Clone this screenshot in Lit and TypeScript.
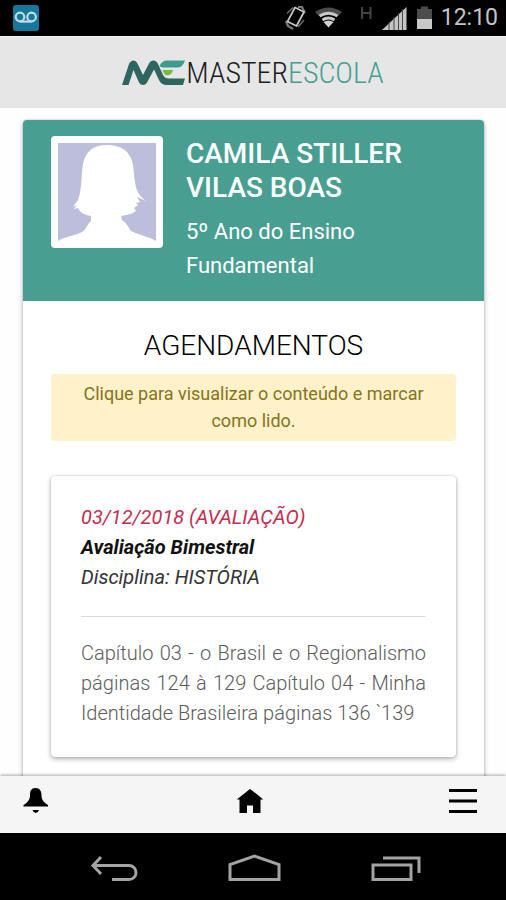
import { LitElement, html, css, svg } from "lit";
import { customElement, property } from "lit/decorators.js";

const base = css`
  :host {
    display: block;
    font-family: Roboto, "Liberation Sans", sans-serif;
    color: #111;
  }
  * {
    box-sizing: border-box;
  }
  svg {
    display: block;
  }
`;

@customElement("status-bar")
class StatusBar extends LitElement {
  static styles = [
    base,
    css`
      .bar {
        display: flex;
        align-items: center;
        justify-content: space-between;
        height: 36px;
        padding: 0 8px 0 12px;
        background: #000;
      }
      .icons {
        display: flex;
        align-items: center;
      }
      .time {
        margin-left: 8px;
        color: #c4c4c4;
        font-size: 23px;
        line-height: 36px;
      }
    `,
  ];

  render() {
    return html`
      <div class="bar">
        <svg width="28" height="28" viewBox="0 0 28 28" aria-label="Correio de voz">
          <rect x="1" y="1" width="26" height="26" rx="3" fill="#15789a" />
          <g fill="none" stroke="#c3dce4" stroke-width="2.2">
            <circle cx="8" cy="13" r="4.3" />
            <circle cx="19.6" cy="13" r="4.3" />
            <path d="M8 17.6H19.6" />
          </g>
        </svg>
        <div class="icons">
          <svg width="154" height="36" viewBox="0 0 154 36" aria-hidden="true">
            <g transform="translate(-281 0)">
              <g fill="none" stroke-width="1.7">
                <path d="M289 13.500l6-6M300 27l6-7" stroke="#666" />
                <path d="M288 21l2 5 5 3" stroke="#777" stroke-width="2.4" />
                <path d="M300 7l4 0 3 6" stroke="#777" stroke-width="2.2" />
                <path d="M297 7.500L306 12 298.500 26 289.500 21.500z" stroke="#c8c8c8" stroke-linejoin="round" />
              </g>
              <path d="M317 12Q330.500 3 344 12L340 16Q330.500 10 321 16z" fill="#4c4c4c" />
              <g fill="none" stroke="#c9c9c9" stroke-width="3">
                <path d="M321.500 16Q330.500 10.500 339.500 16" />
                <path d="M324.500 20Q330.500 16 336.500 20" />
              </g>
              <path d="M325.500 22Q330.500 19 335.500 22L330.500 27.500z" fill="#d4d4d4" />
              <path d="M364 7v12M372.500 7v12M364 13h8.500" stroke="#444" stroke-width="2" fill="none" />
              <path d="M384 30L408.500 7V30z" fill="#c4c4c4" />
              <path d="M391 22v8M396 17v13M400.500 13v17M404.500 9v21" stroke="#444" stroke-width="1" />
              <path d="M419 9h4V6.500h7V9h4v10h-15z" fill="#4c4c4c" />
              <path d="M419 19h15v10h-15z" fill="#c8c8c8" />
            </g>
          </svg>
          <span class="time">12:10</span>
        </div>
      </div>
    `;
  }
}

@customElement("brand-header")
class BrandHeader extends LitElement {
  static styles = [
    base,
    css`
      .header {
        display: flex;
        align-items: center;
        justify-content: center;
        height: 72px;
        background: #e6e6e6;
        border-top: 1px solid #f4f4f4;
      }
      .name {
        font-family: "Roboto Condensed", "Liberation Sans Narrow", Roboto, sans-serif;
        font-size: 30px;
        font-weight: 300;
        line-height: 40px;
        color: #1c1c1c;
      }
      .accent {
        color: #43a092;
      }
    `,
  ];

  render() {
    return html`
      <header class="header">
        <svg width="64" height="26" viewBox="0 0 64 26" aria-hidden="true">
          <path d="M0 25L7 4Q8.500 0.500 11.500 0.500Q14 0.500 15.500 3.500L21 15 27 3.500Q28.500 0.500 31.500 0.500Q34.500 0.500 36 4L41 15Q43 18.500 47 18.500H63L61 25H45Q39 25 37 20L32 9.500 25 22.500Q23.500 25 21 25Q18.500 25 17 22.500L11.500 10 6.500 25z" fill="#2f6560" />
          <path d="M37.500 6Q40 0.500 45 0.500H63Q61 7 56 7.500H42Q39.500 7.500 37.500 6z" fill="#3c9c8e" />
          <path d="M40.500 10H51Q50 15 45 15.500Q42 15 40.500 10z" fill="#76bd3c" />
        </svg>
        <span class="name">MASTER<span class="accent">ESCOLA</span></span>
      </header>
    `;
  }
}

@customElement("student-header")
class StudentHeader extends LitElement {
  @property() name = "";
  @property() grade = "";

  static styles = [
    base,
    css`
      .student {
        display: flex;
        gap: 23px;
        padding: 16px 60px 18px 28px;
        background: #489f91;
        color: #fff;
      }
      .avatar {
        flex: none;
        width: 112px;
        height: 112px;
        padding: 7px;
        border-radius: 4px;
        background: #fff;
      }
      .name {
        margin: 1px 0 10px;
        font-size: 28px;
        font-weight: 500;
        line-height: 34px;
      }
      .grade {
        margin: 0;
        font-size: 22px;
        line-height: 34px;
      }
    `,
  ];

  render() {
    return html`
      <section class="student">
        <div class="avatar">
          <svg width="98" height="98" viewBox="0 0 98 98" role="img" aria-label="Foto do aluno">
            <rect width="98" height="98" fill="#bcbedb" />
            <path d="M49 2C35 2 27 9 25 21C23 33 24 46 20 57L15 64L19 62L16 66L20 65C23 71 28 72 33 73V78C29 81 29 86 24 89C17 93 5 94 0 98H98C93 94 83 93 73 88C70 84 69 80 64 77L63 73C69 72 74 71 78 68L76 65L80 62L78 60L82 59L79 54L88 58C81 53 78 47 77 39C75 29 77 18 69 9C64 4 57 2 49 2Z" fill="#fff" />
          </svg>
        </div>
        <div>
          <h1 class="name">${this.name}</h1>
          <p class="grade">${this.grade}</p>
        </div>
      </section>
    `;
  }
}

@customElement("event-card")
class EventCard extends LitElement {
  @property() date = "";
  @property() kind = "";
  @property() heading = "";
  @property() subject = "";
  @property() details = "";

  static styles = [
    base,
    css`
      .card {
        padding: 26px 30px 29px;
        border-radius: 4px;
        background: #fff;
        box-shadow: 0 2px 5px rgba(0, 0, 0, 0.3), 0 0 2px rgba(0, 0, 0, 0.2);
        font-size: 20px;
        line-height: 30px;
      }
      .card p,
      .title {
        margin: 0;
        font-size: 20px;
        font-style: italic;
      }
      .card .date {
        color: #c52d50;
      }
      .title {
        font-weight: 700;
      }
      .card .subject {
        color: #333;
      }
      .rule {
        height: 1px;
        margin: 24px 0 21px;
        border: 0;
        background: #dcdcdc;
      }
      .card .details {
        color: #5c5c5c;
        font-style: normal;
        font-weight: 300;
        text-align: justify;
      }
    `,
  ];

  render() {
    return html`
      <article class="card">
        <p class="date">${this.date} (${this.kind})</p>
        <h3 class="title">${this.heading}</h3>
        <p class="subject">Disciplina: ${this.subject}</p>
        <hr class="rule" />
        <p class="details">${this.details}</p>
      </article>
    `;
  }
}

@customElement("tab-bar")
class TabBar extends LitElement {
  static styles = [
    base,
    css`
      .tabs {
        display: flex;
        justify-content: space-between;
        height: 57px;
        padding: 8px 29px 8px 22px;
        background: #f5f5f5;
        box-shadow: 0 -1px 3px rgba(0, 0, 0, 0.35);
      }
      .tab {
        padding: 0;
        border: 0;
        background: none;
        height: 32px;
      }
    `,
  ];

  render() {
    return html`
      <nav class="tabs">
        <button class="tab" aria-label="Notificações">
          <svg width="28" height="32" viewBox="0 0 28 32">
            <path d="M13.500 4C9 4 8 7.500 8 11C8 16 6 18 1.500 21V22.500H26V21C21.500 18 19.500 16 19.500 11C19.500 7.500 18 4 13.500 4Z" />
            <path d="M10.500 26H17Q16 29 13.700 29Q11.500 29 10.500 26Z" />
          </svg>
        </button>
        <button class="tab" aria-label="Início">
          <svg width="28" height="32" viewBox="0 0 28 32">
            <path d="M14 5L0.800 15.500H3.500V29H11V21.500H17V29H24.500V15.500H27.200L22.500 11.500Z" />
          </svg>
        </button>
        <button class="tab" aria-label="Menu">
          <svg width="28" height="32" viewBox="0 0 28 32">
            <path d="M0 6.500H28M0 17H28M0 27.500H28" stroke="#000" stroke-width="3" />
          </svg>
        </button>
      </nav>
    `;
  }
}

@customElement("system-nav")
class SystemNav extends LitElement {
  static styles = [
    base,
    css`
      .nav {
        display: flex;
        justify-content: center;
        gap: 86px;
        height: 67px;
        padding: 18px 0 0 3px;
        background: #000;
      }
      .key {
        height: 32px;
        padding: 0;
        border: 0;
        background: none;
      }
    `,
  ];

  private key(label: string, shape: unknown) {
    return html`
      <button class="key" aria-label=${label}>
        <svg width="56" height="32" viewBox="0 0 56 32" fill="none" stroke="#a3a3a3" stroke-width="3">
          ${shape}
        </svg>
      </button>
    `;
  }

  render() {
    return html`
      <nav class="nav">
        ${this.key("Voltar", svg`<path d="M16 6L8 14.500L16 23M8 14.500H44A7 7 0 0 1 44 28.500H27" />`)}
        ${this.key("Tela inicial", svg`<path d="M3 28.500V13.500L27.500 5L52 13.500V28.500Z" />`)}
        ${this.key("Recentes", svg`<path d="M4 14H42V28.500H4ZM14 7H50V22" />`)}
      </nav>
    `;
  }
}

@customElement("app-root")
class AppRoot extends LitElement {
  static styles = [
    base,
    css`
      :host {
        display: flex;
        flex-direction: column;
        height: 100vh;
        background: #fefefe;
      }
      .page {
        flex: 1;
        min-height: 0;
        overflow-y: auto;
        scrollbar-width: none;
        padding: 12px 22px 0 23px;
      }
      .sheet {
        border-radius: 4px;
        overflow: hidden;
        background: #fff;
        box-shadow: 0 2px 5px rgba(0, 0, 0, 0.3), 0 0 2px rgba(0, 0, 0, 0.2);
      }
      .content {
        padding: 28px 28px 40px;
      }
      .heading {
        margin: 0 0 11px;
        font-size: 28px;
        font-weight: 300;
        color: #000;
        line-height: 34px;
        text-align: center;
      }
      .notice {
        margin: 0 0 35px;
        padding: 6px 20px 7px;
        border-radius: 4px;
        background: #fff1ca;
        color: #85741a;
        font-size: 18px;
        line-height: 27px;
        text-align: center;
      }
      .tabs {
        position: relative;
      }
    `,
  ];

  render() {
    return html`
      <status-bar></status-bar>
      <brand-header></brand-header>
      <main class="page">
        <div class="sheet">
          <student-header name="CAMILA STILLER VILAS BOAS" grade="5º Ano do Ensino Fundamental"></student-header>
          <div class="content">
            <h2 class="heading">AGENDAMENTOS</h2>
            <p class="notice">Clique para visualizar o conteúdo e marcar como lido.</p>
            <event-card
              date="03/12/2018"
              kind="AVALIAÇÃO"
              heading="Avaliação Bimestral"
              subject="HISTÓRIA"
              details="Capítulo 03 - o Brasil e o Regionalismo páginas 124 à 129 Capítulo 04 - Minha Identidade Brasileira páginas 136 \`139"
            ></event-card>
          </div>
        </div>
      </main>
      <tab-bar class="tabs"></tab-bar>
      <system-nav></system-nav>
    `;
  }
}
